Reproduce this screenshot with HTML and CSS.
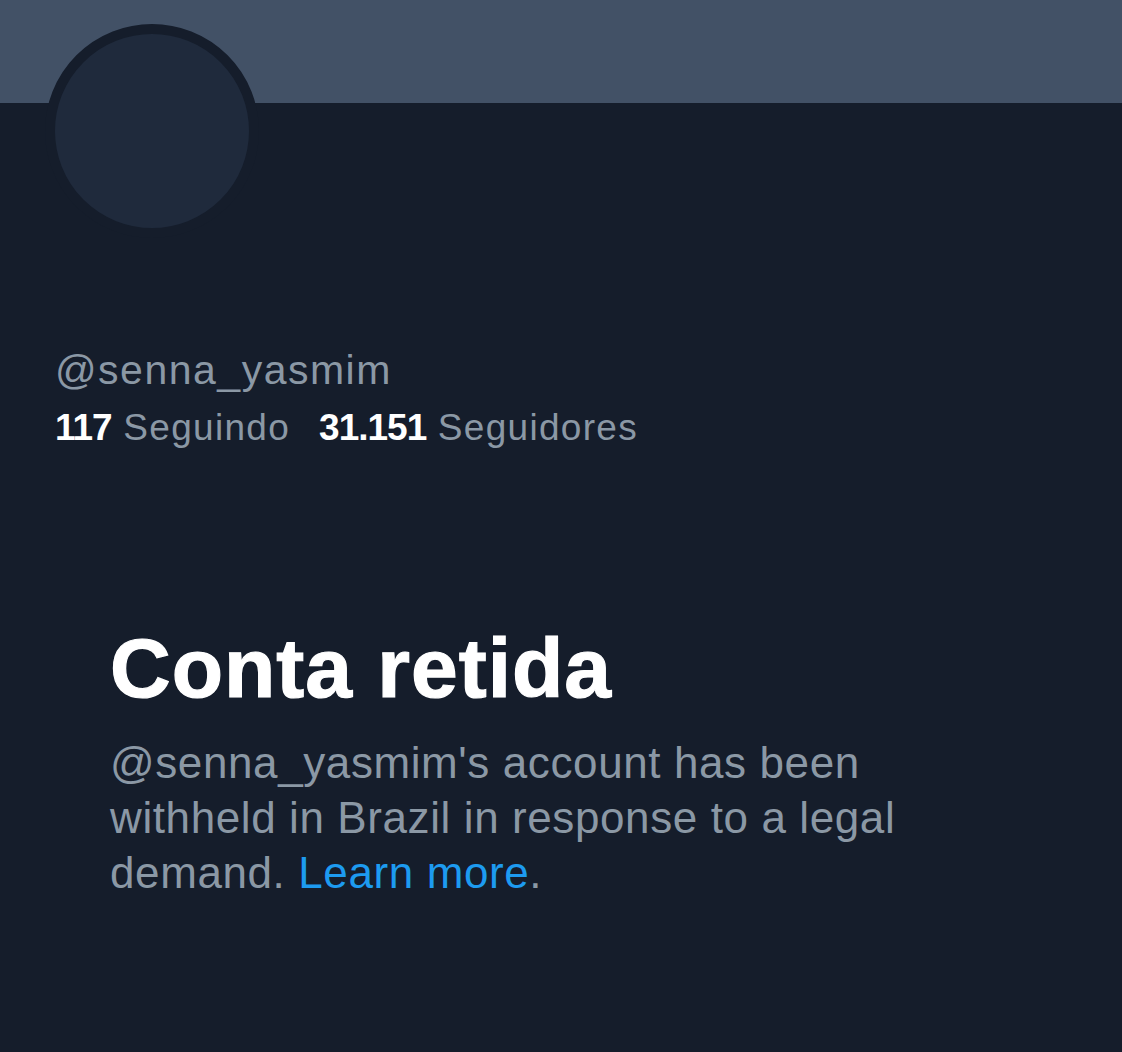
FILE: index.html
```html
<!DOCTYPE html>
<html lang="pt">
<head>
<meta charset="utf-8">
<title>@senna_yasmim</title>
<link rel="stylesheet" href="styles.css">
</head>
<body>
<div class="page">
  <div class="banner"></div>
  <div class="profile">
    <div class="avatar"></div>
    <div class="handle">@senna_yasmim</div>
    <div class="stats">
      <span class="stat"><b>117</b> Seguindo</span>
      <span class="stat"><b>31.151</b> Seguidores</span>
    </div>
  </div>
  <div class="notice">
    <h1 class="notice-title">Conta retida</h1>
    <p class="notice-text">@senna_yasmim's account has been withheld in Brazil in response to a legal demand. <a class="link" href="#">Learn more</a>.</p>
  </div>
</div>
</body>
</html>
```
FILE: styles.css
```css
html, body {
  margin: 0;
  padding: 0;
  background: #151d2b;
}
.page {
  width: 1122px;
  height: 1052px;
  background: #151d2b;
  font-family: "Liberation Sans", Arial, sans-serif;
  overflow: hidden;
}
.banner {
  height: 103px;
  background: #425166;
}
.profile {
  padding-left: 45px;
}
.avatar {
  width: 214px;
  height: 214px;
  box-sizing: border-box;
  border-radius: 50%;
  background: #1f2a3c;
  border: 10px solid #151d2b;
  margin-top: -79px;
}
.handle {
  margin-top: 108px;
  padding-left: 10px;
  font-size: 41px;
  line-height: 48px;
  color: #8b98a5;
  letter-spacing: 1.5px;
}
.stats {
  padding-left: 10px;
  margin-top: 12px;
  font-size: 37px;
  line-height: 44px;
  color: #8b98a5;
  display: flex;
  gap: 29px;
  letter-spacing: 1.3px;
}
.stats b {
  color: #ffffff;
  font-weight: 700;
  letter-spacing: -1px;
}
.notice {
  padding-left: 110px;
  margin-top: 170px;
}
.notice-title {
  margin: 0;
  font-size: 84px;
  line-height: 96px;
  font-weight: 700;
  color: #ffffff;
  letter-spacing: 1px;
  -webkit-text-stroke: 1.2px #ffffff;
}
.notice-text {
  margin: 19px 0 0;
  width: 820px;
  font-size: 44px;
  line-height: 55px;
  color: #8b98a5;
  letter-spacing: 0.6px;
}
.link {
  color: #1d9bf0;
  text-decoration: none;
}
```
